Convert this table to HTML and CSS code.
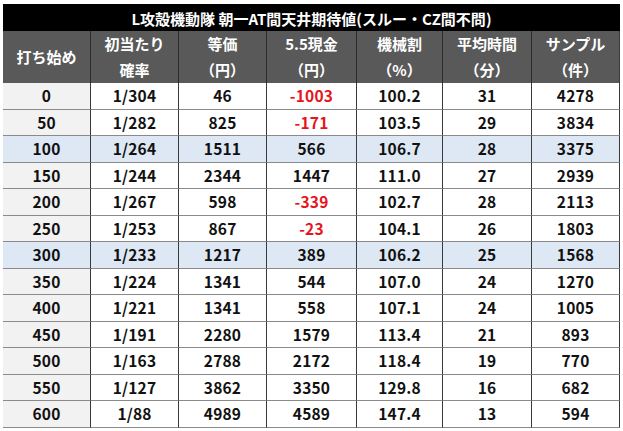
FILE: index.html
```html
<!DOCTYPE html>
<html lang="ja">
<head>
<meta charset="utf-8">
<link rel="stylesheet" href="styles.css">
</head>
<body>
<div class="sheet">
  <div class="title">L攻殻機動隊 朝一AT間天井期待値(スルー・CZ間不問)</div>
  <div class="hd">打ち始め</div>
  <div class="hd">初当たり<br>確率</div>
  <div class="hd">等価<br>（円）</div>
  <div class="hd">5.5現金<br>（円）</div>
  <div class="hd">機械割<br>（%）</div>
  <div class="hd">平均時間<br>（分）</div>
  <div class="hd last">サンプル<br>（件）</div>

  <div class="c first">0</div><div class="c">1/304</div><div class="c">46</div><div class="c neg">-1003</div><div class="c">100.2</div><div class="c">31</div><div class="c last">4278</div>
  <div class="c first">50</div><div class="c">1/282</div><div class="c">825</div><div class="c neg">-171</div><div class="c">103.5</div><div class="c">29</div><div class="c last">3834</div>
  <div class="c first hl">100</div><div class="c hl">1/264</div><div class="c hl">1511</div><div class="c hl">566</div><div class="c hl">106.7</div><div class="c hl">28</div><div class="c hl last">3375</div>
  <div class="c first">150</div><div class="c">1/244</div><div class="c">2344</div><div class="c">1447</div><div class="c">111.0</div><div class="c">27</div><div class="c last">2939</div>
  <div class="c first">200</div><div class="c">1/267</div><div class="c">598</div><div class="c neg">-339</div><div class="c">102.7</div><div class="c">28</div><div class="c last">2113</div>
  <div class="c first">250</div><div class="c">1/253</div><div class="c">867</div><div class="c neg">-23</div><div class="c">104.1</div><div class="c">26</div><div class="c last">1803</div>
  <div class="c first hl">300</div><div class="c hl">1/233</div><div class="c hl">1217</div><div class="c hl">389</div><div class="c hl">106.2</div><div class="c hl">25</div><div class="c hl last">1568</div>
  <div class="c first">350</div><div class="c">1/224</div><div class="c">1341</div><div class="c">544</div><div class="c">107.0</div><div class="c">24</div><div class="c last">1270</div>
  <div class="c first">400</div><div class="c">1/221</div><div class="c">1341</div><div class="c">558</div><div class="c">107.1</div><div class="c">24</div><div class="c last">1005</div>
  <div class="c first">450</div><div class="c">1/191</div><div class="c">2280</div><div class="c">1579</div><div class="c">113.4</div><div class="c">21</div><div class="c last">893</div>
  <div class="c first">500</div><div class="c">1/163</div><div class="c">2788</div><div class="c">2172</div><div class="c">118.4</div><div class="c">19</div><div class="c last">770</div>
  <div class="c first">550</div><div class="c">1/127</div><div class="c">3862</div><div class="c">3350</div><div class="c">129.8</div><div class="c">16</div><div class="c last">682</div>
  <div class="c first">600</div><div class="c">1/88</div><div class="c">4989</div><div class="c">4589</div><div class="c">147.4</div><div class="c">13</div><div class="c last">594</div>
</div>
</body>
</html>
```

FILE: styles.css
```css
html, body {
  margin: 0;
  padding: 0;
  background: #ffffff;
}
body {
  padding: 4px 0 0 3px;
  font-family: "Noto Sans CJK JP", "Noto Sans", sans-serif;
  font-weight: 700;
  color: #111111;
}
.sheet {
  display: grid;
  grid-template-columns: 88px 88px 88px 90px 86px 89px 88px;
  grid-template-rows: 27px 52px repeat(13, 26.5px);
  width: 617px;
}
.sheet > div {
  box-sizing: border-box;
  display: flex;
  align-items: center;
  justify-content: center;
  text-align: center;
}
.title {
  grid-column: 1 / 8;
  background: #000000;
  color: #ffffff;
  font-size: 15px;
  line-height: 1;
  padding-top: 1px;
}
.hd {
  background: #595959;
  color: #ffffff;
  font-size: 15px;
  line-height: 26px;
  border-right: 1px solid #2a2a2a;
}
.c {
  font-size: 15.5px;
  line-height: 1;
  border-right: 1px solid #3a3a3a;
  border-bottom: 1px solid #8a8a8a;
  letter-spacing: 0.2px;
}
.first {
  background: #f2f2f2;
}
.hl {
  background: #dde8f4;
}
.last {
  border-right: 1px solid #3a3a3a;
}
.neg {
  color: #e8141c;
}
```
